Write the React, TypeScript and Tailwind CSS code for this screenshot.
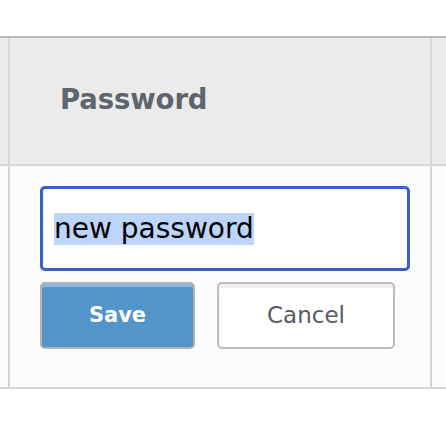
export default function App() {
  const font = { fontFamily: '"DejaVu Sans", sans-serif' };
  return (
    <div className="w-[446px] h-[426px] bg-white" style={font}>
      <div className="h-[36px]" />
      <div className="border-t-2 border-[#b9b9b9]">
        {/* header row */}
        <div className="flex h-[128px] bg-[#ebebeb] border-b-2 border-[#d6d6d6]">
          <div className="w-[8px]" />
          <div className="w-[424px] border-x-2 border-[#d6d6d6] flex items-center pl-[50px] pb-[3px]">
            <span className="text-[27.5px] font-bold text-[#5f656d] tracking-[-0.1px]">Password</span>
          </div>
          <div className="flex-1" />
        </div>
        {/* body row */}
        <div className="flex h-[223px] bg-[#fcfcfc] border-b-2 border-[#d6d6d6]">
          <div className="w-[8px]" />
          <div className="w-[424px] border-x-2 border-[#d6d6d6] pl-[30px] pt-[20px]">
            <div className="w-[370px] h-[85px] bg-white border-[3px] border-[#3860c8] rounded-[5px] flex items-center pl-[11px]">
              <span className="bg-[#bcd6fb] text-black text-[28px] leading-[32px]">new password</span>
            </div>
            <div className="flex gap-[22px] mt-[11px]">
              <button className="w-[155px] h-[67px] rounded-[5px] border-2 border-[#b3b3b3] bg-[#5394c9] shadow-[inset_0_3px_0_#8ab5dc] text-white font-bold text-[21px]">
                Save
              </button>
              <button className="w-[178px] h-[67px] rounded-[5px] border-2 border-[#bcbcbc] bg-white shadow-[inset_0_4px_0_#efefef] text-[#555b63] text-[23px]">
                Cancel
              </button>
            </div>
          </div>
          <div className="flex-1" />
        </div>
      </div>
    </div>
  );
}
